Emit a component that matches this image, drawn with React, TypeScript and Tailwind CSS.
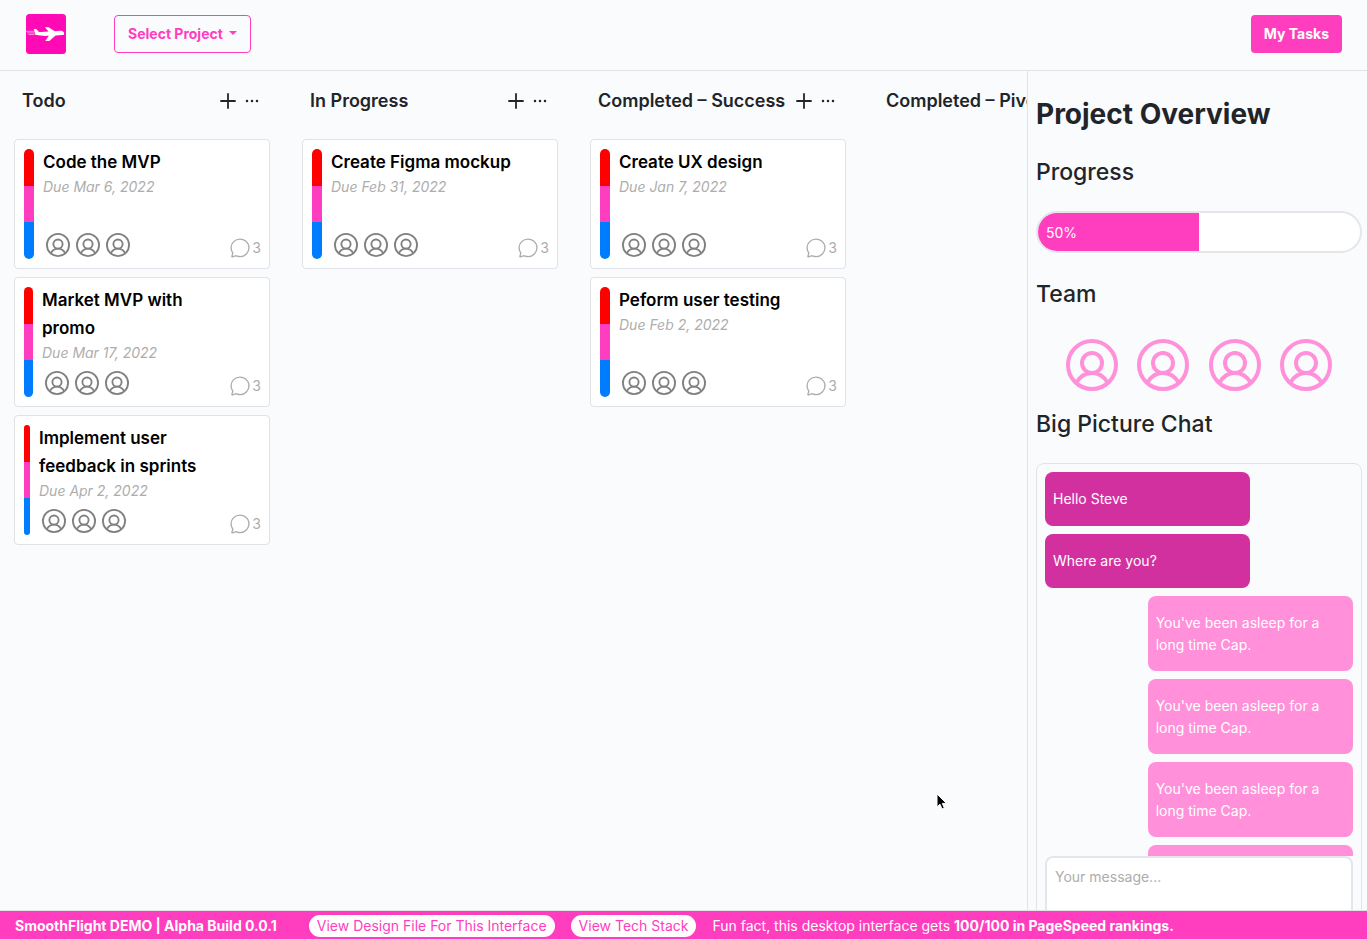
import { IoChatbubbleOutline } from "react-icons/io5";
import { Plus } from "lucide-react";

type Task = { title: string; due: string; bar: string };
type Column = { name: string; tasks: Task[] };

const columns: Column[] = [
  {
    name: "Todo",
    tasks: [
      { title: "Code the MVP", due: "Due Mar 6, 2022", bar: "w-[10px]" },
      { title: "Market MVP with promo", due: "Due Mar 17, 2022", bar: "w-[9px]" },
      { title: "Implement user feedback in sprints", due: "Due Apr 2, 2022", bar: "w-[6px]" },
    ],
  },
  {
    name: "In Progress",
    tasks: [{ title: "Create Figma mockup", due: "Due Feb 31, 2022", bar: "w-[10px]" }],
  },
  {
    name: "Completed – Success",
    tasks: [
      { title: "Create UX design", due: "Due Jan 7, 2022", bar: "w-[10px]" },
      { title: "Peform user testing", due: "Due Feb 2, 2022", bar: "w-[10px]" },
    ],
  },
  { name: "Completed – Pivot", tasks: [] },
];

const messages = [
  { text: "Hello Steve", own: false },
  { text: "Where are you?", own: false },
  { text: "You've been asleep for a long time Cap.", own: true },
  { text: "You've been asleep for a long time Cap.", own: true },
  { text: "You've been asleep for a long time Cap.", own: true },
  { text: "You've been asleep for a long time Cap.", own: true },
];

function Logo() {
  return (
    <svg viewBox="0 0 40 40" className="size-10" role="img" aria-label="SmoothFlight">
      <rect width="40" height="40" rx="3.5" fill="#ff0ab4" />
      <path
        fill="#fff"
        d="M7.800 14.900h2.400l2.800 3c2.800.1 6.200 0 9.600-.4L18.900 13.200h3.600l6.300 4.100c2.400-.4 4.600-.7 6.200-.5 1.900.2 3.100 1.700 3.200 3.100 0 .8-.9 1-2 1.100l-6.600.5L23.300 27h-4l3.500-5.200c-4.200.2-8.700.1-12.200-.7-1.600-.4-2.100-1.100-1.800-2z"
      />
      <path d="M0 17.300h8M1 18.900h7M2.500 20.500h6" stroke="#fff" strokeOpacity=".75" strokeWidth=".7" />
    </svg>
  );
}

function Avatar({ className }: { className: string }) {
  return (
    <svg viewBox="0 0 52 52" className={className} fill="none" stroke="currentColor" strokeWidth="4" aria-hidden="true">
      <circle cx="26" cy="26" r="24" />
      <circle cx="26" cy="24" r="10" />
      <path d="M10.500 43.500C14 37.500 19.500 34 26 34s12 3.500 15.500 9.500" />
    </svg>
  );
}

function Dots() {
  return (
    <svg viewBox="0 0 16 16" className="size-4" fill="currentColor" aria-hidden="true">
      <circle cx="3" cy="8" r="1.250" />
      <circle cx="8" cy="8" r="1.250" />
      <circle cx="13" cy="8" r="1.250" />
    </svg>
  );
}

function Card({ task }: { task: Task }) {
  return (
    <article className="flex h-[130px] rounded border border-[#dfe2e6] bg-white py-2 pr-2 pl-[9px]">
      <div className={`my-px flex shrink-0 flex-col overflow-hidden rounded-full ${task.bar}`}>
        <span className="flex-1 bg-[#ff0000]" />
        <span className="flex-1 bg-[#ff3dbf]" />
        <span className="flex-1 bg-[#007dff]" />
      </div>
      <div className="ml-[9px] flex flex-1 flex-col">
        <h3 className="max-w-[188px] text-[17px] leading-7 font-semibold text-black">{task.title}</h3>
        <p className="text-[14px] leading-[22px] text-[#adadad] italic">{task.due}</p>
        <div className="mt-auto ml-[3px] flex gap-1.5 pb-[3px] text-[#808080]">
          <Avatar className="size-6" />
          <Avatar className="size-6" />
          <Avatar className="size-6" />
        </div>
      </div>
      <div className="flex items-center gap-px self-end pb-px text-[#adadad]">
        <IoChatbubbleOutline size={22} />
        <span className="text-[14px] leading-[22px]">3</span>
      </div>
    </article>
  );
}

export default function App() {
  return (
    <div className="flex h-screen flex-col bg-[#fafbfd] font-['Inter',sans-serif] text-[14px] text-[#212529]">
      <header className="flex h-[71px] shrink-0 items-start justify-between border-b border-[#e1e3e7] pt-[14px] pr-[25px] pl-[26px]">
        <div className="flex items-start gap-12">
          <Logo />
          <button className="mt-px flex h-[38px] items-center gap-1.5 rounded border border-[#ff3dbf] px-[13px] pb-0.5 font-bold text-[#ff3dbf]">
            Select Project
            <span className="border-x-4 border-t-4 border-x-transparent border-t-[#ff3dbf]" />
          </button>
        </div>
        <button className="mt-px h-[38px] rounded bg-[#ff3dbf] px-[13px] pb-0.5 font-bold text-white">My Tasks</button>
      </header>

      <div className="flex min-h-0 flex-1">
        <main className="flex min-w-0 flex-1 gap-8 overflow-hidden pl-[14px]">
          {columns.map((column) => (
            <section key={column.name} className="w-64 shrink-0">
              <div className="flex h-[68px] items-start justify-between pt-4 pr-[10px] pl-2">
                <h2 className="text-[18px] leading-7 font-semibold whitespace-nowrap">{column.name}</h2>
                <div className="flex h-7 items-center gap-1">
                  <button aria-label="Add task">
                    <Plus size={24} strokeWidth={1.8} />
                  </button>
                  <button aria-label="Column menu">
                    <Dots />
                  </button>
                </div>
              </div>
              <div className="flex flex-col gap-2">
                {column.tasks.map((task) => (
                  <Card key={task.title} task={task} />
                ))}
              </div>
            </section>
          ))}
        </main>

        <aside className="flex w-[340px] shrink-0 flex-col overflow-hidden border-l border-[#e1e3e7] pr-[5px] pl-2">
          <h1 className="mt-6 text-[28px] leading-[38px] font-bold">Project Overview</h1>
          <h2 className="mt-6 text-[23px] leading-[30px] font-medium">Progress</h2>
          <div className="mt-6 h-[42px] shrink-0 overflow-hidden rounded-full border-2 border-[#e4e6e9] bg-white">
            <div className="flex h-full w-1/2 items-center bg-[#ff3dbf] pl-2 text-white">50%</div>
          </div>
          <h2 className="mt-[26px] text-[23px] leading-[30px] font-medium">Team</h2>
          <div className="mt-[30px] flex justify-around px-5 text-[#ff90d9]">
            <Avatar className="size-13" />
            <Avatar className="size-13" />
            <Avatar className="size-13" />
            <Avatar className="size-13" />
          </div>
          <h2 className="mt-[18px] text-[23px] leading-[30px] font-medium">Big Picture Chat</h2>
          <div className="mt-6 flex shrink-0 flex-col rounded-lg border border-[#e1e3e7] p-2">
            <div className="flex h-96 flex-col gap-2 overflow-hidden text-white">
              {messages.map((message, index) => (
                <p
                  key={index}
                  className={
                    message.own
                      ? "w-2/3 shrink-0 self-end rounded-lg bg-[#ff90d9] px-2 pt-4 pb-[15px] leading-[22px]"
                      : "w-2/3 shrink-0 rounded-lg bg-[#d3309f] px-2 py-4 leading-[22px]"
                  }
                >
                  {message.text}
                </p>
              ))}
            </div>
            <textarea
              aria-label="Your message"
              placeholder="Your message..."
              className="h-24 resize-none rounded-lg border-2 border-[#e4e6e9] bg-white px-2 py-2 leading-[22px] placeholder:text-[#adadad]"
            />
          </div>
        </aside>
      </div>

      <footer className="flex h-[29px] shrink-0 items-center gap-4 border-t border-[#e1e3e7] bg-[#ff3dbf] pt-0.5 pl-[15px] leading-[22px] whitespace-nowrap text-white">
        <strong className="mr-4 font-bold">SmoothFlight DEMO | Alpha Build 0.0.1</strong>
        <a href="#design" className="rounded-full bg-white px-2 text-[#ff3dbf]">
          View Design File For This Interface
        </a>
        <a href="#stack" className="rounded-full bg-white px-2 text-[#ff3dbf]">
          View Tech Stack
        </a>
        <span>
          Fun fact, this desktop interface gets <strong className="font-bold">100/100 in PageSpeed rankings.</strong>
        </span>
      </footer>

      <svg
        viewBox="0 0 12 18"
        className="pointer-events-none absolute top-[793px] left-[936px] h-[18px] w-3"
        aria-hidden="true"
      >
        <path
          d="M1 1v13l3-2.800 2 4.800 2.300-1-2-4.600h4.200z"
          fill="#000"
          stroke="#fff"
          strokeWidth="1"
          strokeLinejoin="round"
        />
      </svg>
    </div>
  );
}
